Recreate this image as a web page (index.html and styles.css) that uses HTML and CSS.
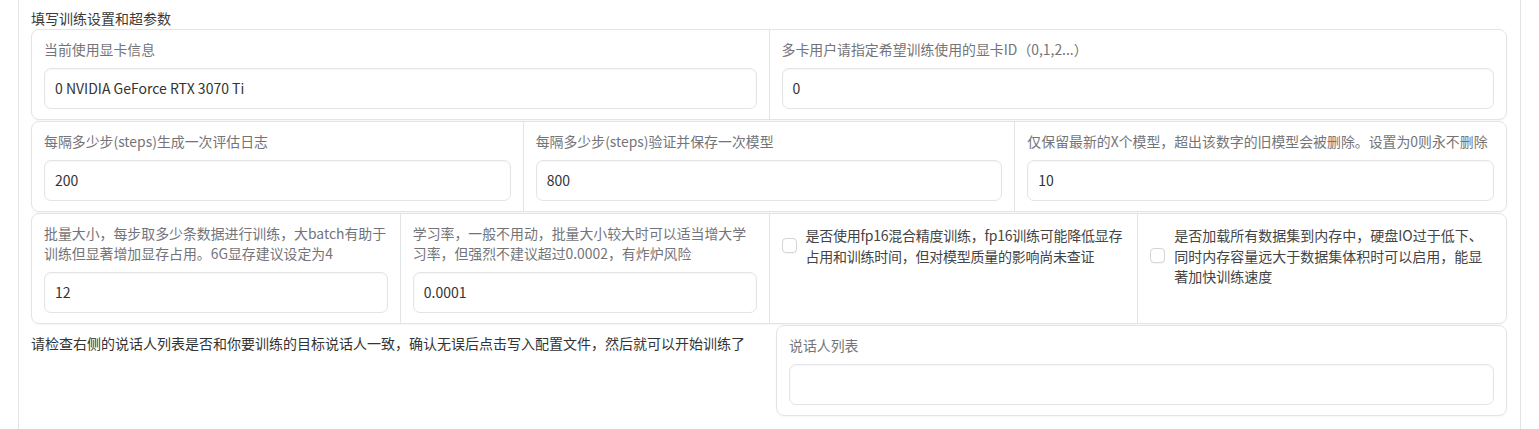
FILE: index.html
```html
<!DOCTYPE html>
<html lang="zh-CN">
<head>
  <meta charset="UTF-8">
  <title>训练设置</title>
  <meta name="viewport" content="width=device-width, initial-scale=1.0">
  <link rel="stylesheet" href="styles.css">
</head>
<body>

  <div class="panel">
    <div class="panel-title">填写训练设置和超参数</div>

    <!-- GPU -->
    <div class="form-row">
      <div class="cell">
        <label class="label">当前使用显卡信息</label>
        <div class="input">0 NVIDIA GeForce RTX 3070 Ti</div>
      </div>
      <div class="cell">
        <label class="label">多卡用户请指定希望训练使用的显卡ID（0,1,2...）</label>
        <div class="input">0</div>
      </div>
    </div>

    <!-- steps -->
    <div class="form-row">
      <div class="cell">
        <label class="label">每隔多少步(steps)生成一次评估日志</label>
        <div class="input">200</div>
      </div>
      <div class="cell">
        <label class="label">每隔多少步(steps)验证并保存一次模型</label>
        <div class="input">800</div>
      </div>
      <div class="cell">
        <label class="label">仅保留最新的X个模型，超出该数字的旧模型会被删除。设置为0则永不删除</label>
        <div class="input">10</div>
      </div>
    </div>

    <!-- hyper params -->
    <div class="form-row">
      <div class="cell">
        <label class="label">批量大小，每步取多少条数据进行训练，大batch有助于训练但显著增加显存占用。6G显存建议设定为4</label>
        <div class="input">12</div>
      </div>
      <div class="cell">
        <label class="label">学习率，一般不用动，批量大小较大时可以适当增大学习率，但强烈不建议超过0.0002，有炸炉风险</label>
        <div class="input">0.0001</div>
      </div>
      <div class="cell">
        <label class="check">
          <span class="box"></span>
          <span class="check-text tight">是否使用fp16混合精度训练，fp16训练可能降低显存占用和训练时间，但对模型质量的影响尚未查证</span>
        </label>
      </div>
      <div class="cell">
        <label class="check">
          <span class="box"></span>
          <span class="check-text">是否加载所有数据集到内存中，硬盘IO过于低下、同时内存容量远大于数据集体积时可以启用，能显著加快训练速度</span>
        </label>
      </div>
    </div>

    <div class="bottom">
      <p class="note">请检查右侧的说话人列表是否和你要训练的目标说话人一致，确认无误后点击写入配置文件，然后就可以开始训练了</p>
      <div class="form-row single">
        <div class="cell">
          <label class="label">说话人列表</label>
          <div class="input"></div>
        </div>
      </div>
    </div>
  </div>

</body>
</html>
```

FILE: styles.css
```css
:root {
  --border: #e4e4e7;
  --label: #747478;
  --text: #333;
}

body {
  margin: 0;
  background: #fff;
  font-family: "Noto Sans CJK SC", "Noto Sans", sans-serif;
  font-size: 14px;
  color: var(--text);
}

.panel {
  margin: 0 18px;
  padding: 8px 13px 40px 12px;
  border-left: 1px solid var(--border);
  border-right: 1px solid var(--border);
  min-height: 460px;
}

.panel-title {
  line-height: 20px;
  margin-bottom: 1px;
  color: #3a3a3a;
}

.form-row {
  display: flex;
  border: 1px solid var(--border);
  border-radius: 8px;
  margin-bottom: 1px;
  box-shadow: 0 1px 2px rgba(0, 0, 0, 0.04);
}

.cell {
  flex: 1;
  min-width: 0;
  padding: 9px 12px 10px 12px;
  border-left: 1px solid var(--border);
}

.cell:first-child {
  border-left: none;
}

.label {
  display: block;
  color: var(--label);
  font-size: 13.9px;
  line-height: 20px;
  margin-bottom: 9px;
}

.input {
  height: 39px;
  border: 1px solid var(--border);
  border-radius: 7px;
  padding: 0 10px;
  line-height: 39px;
  box-shadow: inset 0 1px 2px rgba(0, 0, 0, 0.04);
}

.check {
  display: flex;
  align-items: center;
  gap: 9px;
  padding-top: 2px;
  color: #444;
}

.box {
  flex: none;
  width: 13px;
  height: 13px;
  border: 1px solid #d4d4d8;
  border-radius: 4px;
  box-shadow: 0 1px 1px rgba(0, 0, 0, 0.04);
}

.check-text {
  line-height: 20.5px;
}

.check-text.tight {
  letter-spacing: -0.25px;
}

.bottom {
  display: flex;
  gap: 16px;
  margin-top: 1px;
}

.note {
  flex: 1;
  margin: 0;
  padding-top: 8px;
  line-height: 20px;
}

.bottom .form-row {
  flex: 1;
}
```
